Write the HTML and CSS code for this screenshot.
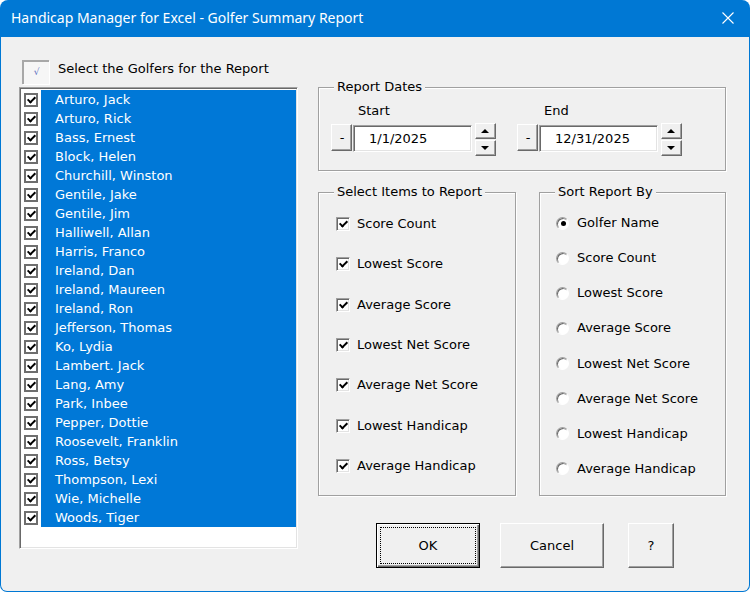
FILE: index.html
```html
<!DOCTYPE html>
<html>
<head>
<meta charset="utf-8">
<link rel="stylesheet" href="styles.css">
</head>
<body>
<div class="window">
  <div class="titlebar">
    <span class="title">Handicap Manager for Excel - Golfer Summary Report</span>
    <svg class="close" width="12" height="12" viewBox="0 0 12 12"><path d="M0.5 0.5L11.5 11.5M11.5 0.5L0.5 11.5" stroke="#fff" stroke-width="1.1" fill="none"/></svg>
  </div>
  <div class="client">
    <div class="left">
      <div class="hdr">
        <span class="toggle">√</span>
        <span class="hdr-label">Select the Golfers for the Report</span>
      </div>
      <div class="listbox">
        <div class="row"><span class="lcb"></span><span class="name">Arturo, Jack</span></div>
        <div class="row"><span class="lcb"></span><span class="name">Arturo, Rick</span></div>
        <div class="row"><span class="lcb"></span><span class="name">Bass, Ernest</span></div>
        <div class="row"><span class="lcb"></span><span class="name">Block, Helen</span></div>
        <div class="row"><span class="lcb"></span><span class="name">Churchill, Winston</span></div>
        <div class="row"><span class="lcb"></span><span class="name">Gentile, Jake</span></div>
        <div class="row"><span class="lcb"></span><span class="name">Gentile, Jim</span></div>
        <div class="row"><span class="lcb"></span><span class="name">Halliwell, Allan</span></div>
        <div class="row"><span class="lcb"></span><span class="name">Harris, Franco</span></div>
        <div class="row"><span class="lcb"></span><span class="name">Ireland, Dan</span></div>
        <div class="row"><span class="lcb"></span><span class="name">Ireland, Maureen</span></div>
        <div class="row"><span class="lcb"></span><span class="name">Ireland, Ron</span></div>
        <div class="row"><span class="lcb"></span><span class="name">Jefferson, Thomas</span></div>
        <div class="row"><span class="lcb"></span><span class="name">Ko, Lydia</span></div>
        <div class="row"><span class="lcb"></span><span class="name">Lambert. Jack</span></div>
        <div class="row"><span class="lcb"></span><span class="name">Lang, Amy</span></div>
        <div class="row"><span class="lcb"></span><span class="name">Park, Inbee</span></div>
        <div class="row"><span class="lcb"></span><span class="name">Pepper, Dottie</span></div>
        <div class="row"><span class="lcb"></span><span class="name">Roosevelt, Franklin</span></div>
        <div class="row"><span class="lcb"></span><span class="name">Ross, Betsy</span></div>
        <div class="row"><span class="lcb"></span><span class="name">Thompson, Lexi</span></div>
        <div class="row"><span class="lcb"></span><span class="name">Wie, Michelle</span></div>
        <div class="row"><span class="lcb"></span><span class="name">Woods, Tiger</span></div>
      </div>
    </div>
    <div class="right">
      <fieldset class="frame dates">
        <legend>Report Dates</legend>
        <div class="dates-row">
          <div class="dgroup">
            <div class="dlabel">Start</div>
            <div class="dctrl">
              <span class="minus">-</span>
              <span class="tbox">1/1/2025</span>
              <span class="spin"><span class="sp"><span class="tri-up"></span></span><span class="sp"><span class="tri-down"></span></span></span>
            </div>
          </div>
          <div class="dgroup">
            <div class="dlabel">End</div>
            <div class="dctrl">
              <span class="minus">-</span>
              <span class="tbox">12/31/2025</span>
              <span class="spin"><span class="sp"><span class="tri-up"></span></span><span class="sp"><span class="tri-down"></span></span></span>
            </div>
          </div>
        </div>
      </fieldset>
      <div class="frames">
        <fieldset class="frame items">
          <legend>Select Items to Report</legend>
          <div class="opts checks">
            <div class="opt"><span class="cb"></span><span>Score Count</span></div>
            <div class="opt"><span class="cb"></span><span>Lowest Score</span></div>
            <div class="opt"><span class="cb"></span><span>Average Score</span></div>
            <div class="opt"><span class="cb"></span><span>Lowest Net Score</span></div>
            <div class="opt"><span class="cb"></span><span>Average Net Score</span></div>
            <div class="opt"><span class="cb"></span><span>Lowest Handicap</span></div>
            <div class="opt"><span class="cb"></span><span>Average Handicap</span></div>
          </div>
        </fieldset>
        <fieldset class="frame sort">
          <legend>Sort Report By</legend>
          <div class="opts radios">
            <div class="opt"><span class="rb on"></span><span>Golfer Name</span></div>
            <div class="opt"><span class="rb"></span><span>Score Count</span></div>
            <div class="opt"><span class="rb"></span><span>Lowest Score</span></div>
            <div class="opt"><span class="rb"></span><span>Average Score</span></div>
            <div class="opt"><span class="rb"></span><span>Lowest Net Score</span></div>
            <div class="opt"><span class="rb"></span><span>Average Net Score</span></div>
            <div class="opt"><span class="rb"></span><span>Lowest Handicap</span></div>
            <div class="opt"><span class="rb"></span><span>Average Handicap</span></div>
          </div>
        </fieldset>
      </div>
      <div class="buttons">
        <div class="btn ok"><span class="focus">OK</span></div>
        <div class="btn cancel">Cancel</div>
        <div class="btn help">?</div>
      </div>
    </div>
  </div>
</div>
</body>
</html>
```
FILE: styles.css
```css
html, body {
  margin: 0;
  padding: 0;
  background: #ffffff;
}
body {
  font-family: "DejaVu Sans", "Liberation Sans", sans-serif;
  font-size: 13px;
  color: #000;
}
.window {
  width: 750px;
  height: 592px;
  box-sizing: border-box;
  background: #0078d4;
  border-radius: 8px 8px 7px 7px;
  display: flex;
  flex-direction: column;
  overflow: hidden;
}
.titlebar {
  height: 37px;
  flex: none;
  display: flex;
  align-items: center;
  justify-content: space-between;
  padding: 0 16px 0 11px;
  color: #fff;
  font-family: "Noto Sans", "Open Sans", sans-serif;
  font-size: 14px;
}
.title {
  line-height: 18px;
  margin-top: -1px;
}
.close {
  display: block;
  margin-top: -1px;
}
.client {
  flex: 1;
  margin: 0 1px 1px 1px;
  background: #f0f0f0;
  border-radius: 0 0 6px 6px;
  display: flex;
  padding-left: 18px;
}
.left {
  width: 279px;
  padding-top: 23px;
}
.hdr {
  display: flex;
  align-items: flex-start;
  margin-left: 3px;
  height: 24px;
}
.toggle {
  width: 27px;
  height: 24px;
  box-sizing: border-box;
  border-style: solid;
  border-width: 2px 0 0 2px;
  border-color: #a8a8a8;
  box-shadow: 1px 1px 0 #fff;
  background: #f6f6f6;
  color: #5a6fc0;
  font-size: 9px;
  line-height: 20px;
  text-align: center;
}
.hdr-label {
  margin-left: 9px;
  line-height: 16px;
  margin-top: 1px;
}
.listbox {
  margin-top: 3px;
  height: 462px;
  box-sizing: border-box;
  background: #fff;
  border-style: solid;
  border-width: 1px;
  border-color: #a0a0a0 #fff #fff #a0a0a0;
  box-shadow: inset 1px 1px 0 #696969, inset -1px -1px 0 #e3e3e3;
  padding: 2px 1px 0 0;
}
.row {
  display: flex;
  align-items: center;
  height: 19px;
}
.lcb {
  width: 14px;
  height: 14px;
  box-sizing: border-box;
  border: 2px solid #6e6e6e;
  background: #fff;
  margin-left: 4px;
  flex: none;
}
.lcb::after, .cb::after {
  content: "";
  display: block;
  width: 3px;
  height: 6px;
  border: solid #000;
  border-width: 0 2px 2px 0;
  transform: rotate(45deg);
  margin: 0 0 0 3px;
}
.name {
  flex: 1;
  height: 19px;
  line-height: 19px;
  background: #0078d7;
  color: #fff;
  margin-left: 3px;
  padding-left: 14px;
}
.right {
  width: 408px;
  margin-left: 20px;
  padding-top: 42px;
}
.frame {
  margin: 0;
  padding: 0;
  min-width: 0;
  box-sizing: border-box;
  border: 1px solid #a0a0a0;
  box-shadow: inset 1px 1px 0 #fff, 1px 1px 0 #fff;
}
.frame legend {
  margin-left: 15px;
  padding: 0 3px;
  line-height: 16px;
  background: #f0f0f0;
}
.dates {
  height: 92px;
}
.dates-row {
  display: flex;
  gap: 21px;
  padding: 8px 0 0 12px;
}
.dlabel {
  margin-left: 27px;
  line-height: 16px;
  height: 16px;
  margin-bottom: 4px;
}
.dctrl {
  display: flex;
  align-items: flex-start;
}
.minus {
  width: 21px;
  height: 27px;
  margin-top: 1px;
  box-sizing: border-box;
  border-style: solid;
  border-width: 1px;
  border-color: #fff #696969 #696969 #fff;
  box-shadow: inset -1px -1px 0 #a0a0a0;
  text-align: center;
  line-height: 26px;
  padding-left: 1px;
}
.tbox {
  width: 119px;
  height: 27px;
  margin: 2px 0 0 1px;
  box-sizing: border-box;
  background: #fff;
  border-style: solid;
  border-width: 1px;
  border-color: #a0a0a0 #fff #fff #a0a0a0;
  box-shadow: inset 1px 1px 0 #696969, inset -1px -1px 0 #e3e3e3;
  padding-left: 15px;
  line-height: 25px;
}
.spin {
  display: flex;
  flex-direction: column;
  gap: 1px;
  margin-left: 3px;
}
.sp {
  width: 21px;
  height: 16px;
  box-sizing: border-box;
  border-style: solid;
  border-width: 1px;
  border-color: #fff #696969 #696969 #fff;
  box-shadow: inset -1px -1px 0 #a0a0a0;
  display: flex;
  align-items: center;
  justify-content: center;
}
.tri-up {
  width: 0;
  height: 0;
  border-left: 4px solid transparent;
  border-right: 4px solid transparent;
  border-bottom: 4px solid #000;
  margin: -1px 1px 0 0;
}
.tri-down {
  width: 0;
  height: 0;
  border-left: 4px solid transparent;
  border-right: 4px solid transparent;
  border-top: 4px solid #000;
  margin: 0 1px 0 0;
}
.frames {
  display: flex;
  gap: 23px;
  margin-top: 13px;
}
.items {
  width: 198px;
  height: 312px;
}
.sort {
  width: 187px;
  height: 312px;
}
.opts {
  display: flex;
  flex-direction: column;
  justify-content: space-between;
}
.checks {
  height: 258px;
  padding: 16px 0 0 17px;
}
.radios {
  height: 262px;
  padding: 15px 0 0 16px;
}
.opt {
  display: flex;
  align-items: center;
  height: 16px;
  line-height: 16px;
}
.cb {
  width: 14px;
  height: 14px;
  box-sizing: border-box;
  background: #fff;
  border-style: solid;
  border-width: 1px;
  border-color: #a0a0a0 #fff #fff #a0a0a0;
  box-shadow: inset 1px 1px 0 #696969, inset -1px -1px 0 #e3e3e3;
  margin-right: 7px;
  flex: none;
  padding-top: 1px;
}
.cb::after {
  margin-left: 4px;
}
.rb {
  width: 13px;
  height: 13px;
  box-sizing: border-box;
  border-radius: 50%;
  background: #fff;
  border-style: solid;
  border-width: 1px;
  border-color: #a0a0a0 #fff #fff #a0a0a0;
  box-shadow: inset 1px 1px 0 #696969;
  margin-right: 8px;
  flex: none;
  display: flex;
  align-items: center;
  justify-content: center;
}
.rb.on::after {
  content: "";
  width: 5px;
  height: 5px;
  border-radius: 50%;
  background: #000;
  margin: 1px 0 0 1px;
}
.buttons {
  display: flex;
  margin: 27px 0 0 58px;
}
.btn {
  height: 45px;
  box-sizing: border-box;
  display: flex;
  align-items: center;
  justify-content: center;
  border-style: solid;
  border-width: 1px;
  border-color: #fff #696969 #696969 #fff;
  box-shadow: inset -1px -1px 0 #a0a0a0;
}
.ok {
  width: 104px;
  border-color: #000;
  box-shadow: inset 1px 1px 0 #fff, inset -1px -1px 0 #696969, inset -2px -2px 0 #a0a0a0;
  align-items: stretch;
  justify-content: stretch;
}
.ok .focus {
  flex: 1;
  margin: 3px;
  border: 1px dotted #000;
  display: flex;
  align-items: center;
  justify-content: center;
}
.cancel {
  width: 104px;
  margin-left: 20px;
}
.help {
  width: 46px;
  margin-left: 24px;
}
```
